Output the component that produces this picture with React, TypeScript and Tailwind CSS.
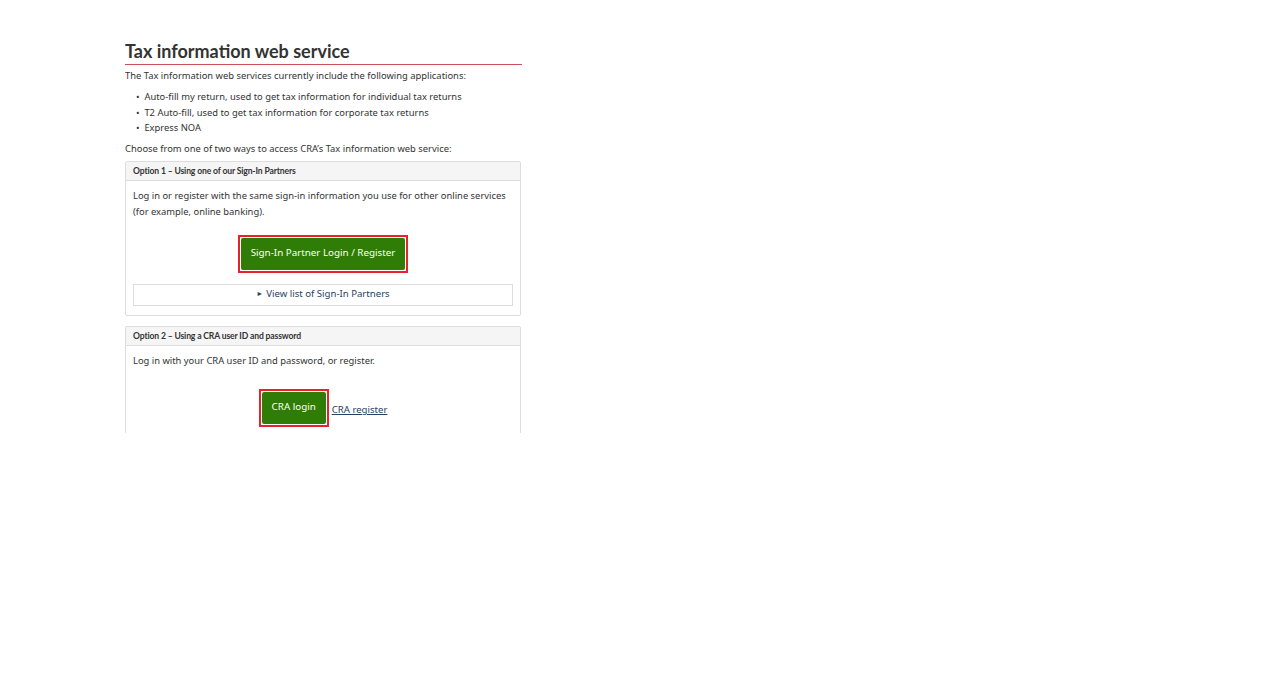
export default function App() {
  const body = "font-['Noto_Sans',sans-serif] text-[9.4px] text-[#333]"
  const heading =
    "h-[19px] px-[7px] pt-[1px] flex items-center bg-[#f5f5f5] border-b border-[#ddd] font-['Lato',sans-serif] font-bold text-[8.6px] text-[#333] tracking-[-0.15px]"
  const greenBtn =
    "h-[32px] px-[10px] bg-[#2f7d06] text-white font-['Noto_Sans',sans-serif] text-[9.8px] rounded-[2px]"

  return (
    <div className="w-[1280px] h-[688px] bg-white">
      <div className="ml-[125px] w-[397px] h-[433px] overflow-hidden pt-[40px]">
        <h1 className="font-['Lato',sans-serif] font-bold text-[18px] leading-[22px] text-[#333] pb-[2px] border-b border-[#cc5058]">
          Tax information web service
        </h1>
        <p className={`${body} leading-[15px] mt-[3px]`}>
          The Tax information web services currently include the following applications:
        </p>
        <ul className={`${body} leading-[15.5px] mt-[6px] ml-[11px]`}>
          <li>• &nbsp;Auto-fill my return, used to get tax information for individual tax returns</li>
          <li>• &nbsp;T2 Auto-fill, used to get tax information for corporate tax returns</li>
          <li>• &nbsp;Express NOA</li>
        </ul>
        <p className={`${body} leading-[15px] mt-[5px]`}>
          Choose from one of two ways to access CRA’s Tax information web service:
        </p>

        {/* Option 1 */}
        <section className="mt-[5px] w-[396px] border border-[#ddd] rounded-[2px]">
          <div className={heading}>Option 1 – Using one of our Sign-In Partners</div>
          <div className="px-[7px] pt-[7px] pb-[9px]">
            <p className={`${body} leading-[16px]`}>
              Log in or register with the same sign-in information you use for other online services (for example, online banking).
            </p>
            <div className="flex justify-center mt-[15px]">
              <div className="border-2 border-[#e8212b] p-px">
                <button className={greenBtn}>Sign-In Partner Login / Register</button>
              </div>
            </div>
            <div className="mt-[11px] h-[22px] border border-[#ddd] flex items-center justify-center font-['Noto_Sans',sans-serif] text-[9.6px] text-[#284162]">
              <span className="text-[7px] mr-[3px]">►</span>View list of Sign-In Partners
            </div>
          </div>
        </section>

        {/* Option 2 */}
        <section className="mt-[10px] w-[396px] border border-[#ddd] rounded-[2px] h-[200px]">
          <div className={heading}>Option 2 – Using a CRA user ID and password</div>
          <div className="px-[7px] pt-[7px]">
            <p className={`${body} leading-[16px]`}>Log in with your CRA user ID and password, or register.</p>
            <div className="flex justify-center items-center mt-[20px] gap-[3px]">
              <div className="border-2 border-[#e8212b] p-px">
                <button className={greenBtn}>CRA login</button>
              </div>
              <a className="mt-[6px] font-['Noto_Sans',sans-serif] text-[9.6px] text-[#284162] underline">CRA register</a>
            </div>
          </div>
        </section>
      </div>
    </div>
  )
}
